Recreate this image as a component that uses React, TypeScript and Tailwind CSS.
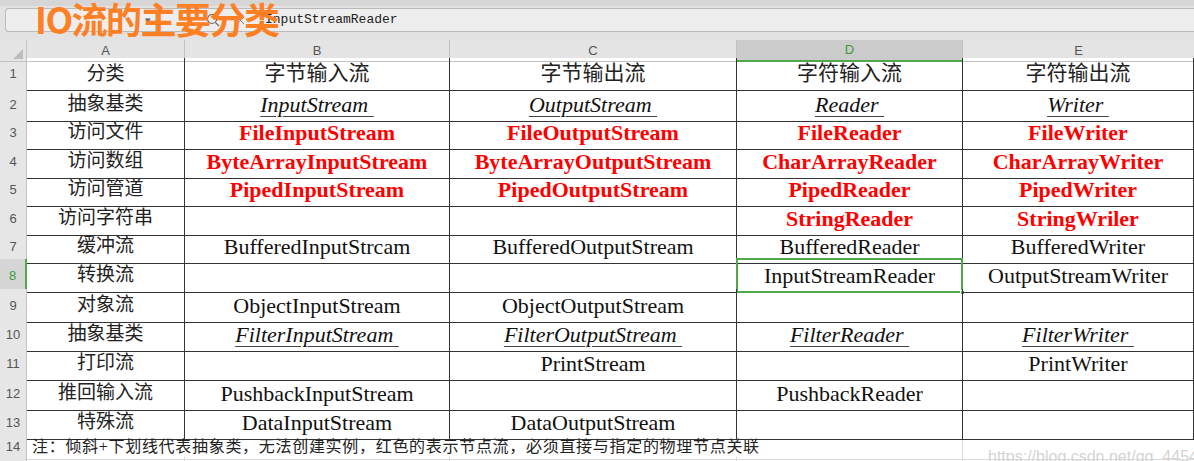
import { FC } from "react";
import { X } from "lucide-react";

type Kind = "n" | "r" | "i" | "h";

interface Row {
    num: number;
    h: string;
    label: string;
    cells: [string, Kind][];
}

const rows: Row[] = [
    { num: 1, h: "h-[30px]", label: "分类", cells: [["字节输入流", "h"], ["字节输出流", "h"], ["字符输入流", "h"], ["字符输出流", "h"]] },
    { num: 2, h: "h-[28px]", label: "抽象基类", cells: [["InputStream", "i"], ["OutputStream", "i"], ["Reader", "i"], ["Writer", "i"]] },
    { num: 3, h: "h-[29px]", label: "访问文件", cells: [["FileInputStream", "r"], ["FileOutputStream", "r"], ["FileReader", "r"], ["FileWriter", "r"]] },
    { num: 4, h: "h-[28px]", label: "访问数组", cells: [["ByteArrayInputStream", "r"], ["ByteArrayOutputStream", "r"], ["CharArrayReader", "r"], ["CharArrayWriter", "r"]] },
    { num: 5, h: "h-[29px]", label: "访问管道", cells: [["PipedInputStream", "r"], ["PipedOutputStream", "r"], ["PipedReader", "r"], ["PipedWriter", "r"]] },
    { num: 6, h: "h-[28px]", label: "访问字符串", cells: [["", "n"], ["", "n"], ["StringReader", "r"], ["StringWriler", "r"]] },
    { num: 7, h: "h-[29px]", label: "缓冲流", cells: [["BufferedInputStrcam", "n"], ["BufferedOutputStream", "n"], ["BufferedReader", "n"], ["BufferedWriter", "n"]] },
    { num: 8, h: "h-[30px]", label: "转换流", cells: [["", "n"], ["", "n"], ["InputStreamReader", "n"], ["OutputStreamWriter", "n"]] },
    { num: 9, h: "h-[29px]", label: "对象流", cells: [["ObjectInputStream", "n"], ["ObjectOutputStream", "n"], ["", "n"], ["", "n"]] },
    { num: 10, h: "h-[29px]", label: "抽象基类", cells: [["FilterInputStream", "i"], ["FilterOutputStream", "i"], ["FilterReader", "i"], ["FilterWriter", "i"]] },
    { num: 11, h: "h-[30px]", label: "打印流", cells: [["", "n"], ["PrintStream", "n"], ["", "n"], ["PrintWriter", "n"]] },
    { num: 12, h: "h-[29px]", label: "推回输入流", cells: [["PushbackInputStream", "n"], ["", "n"], ["PushbackReader", "n"], ["", "n"]] },
    { num: 13, h: "h-[29px]", label: "特殊流", cells: [["DataInputStream", "n"], ["DataOutputStream", "n"], ["", "n"], ["", "n"]] },
];

const kindClass: Record<Kind, string> = {
    n: "text-[22px] text-[#111]",
    r: "text-[22px] font-bold text-[#ff0000]",
    i: "text-[22px] italic text-[#111] underline decoration-[#444] decoration-1 underline-offset-[4px]",
    h: "text-[21px] text-[#222]",
};

const grid = "grid grid-cols-[27px_158px_265px_287px_226px_231px]";
const serif = "font-['Liberation_Serif','Noto_Sans_CJK_SC',serif]";
const sans = "font-['Liberation_Sans',Arial,sans-serif]";

const RowHead: FC<{ num?: number; active?: boolean }> = ({ num, active }) => (
    <div className={`flex items-center justify-center text-[13px] ${sans} border-b border-[#cdcdcd] ${active ? "bg-[#d6d6d6] text-[#3c9a3c] border-r-2 border-r-[#4ea94b]" : "bg-[#e6e6e6] text-[#555] border-r border-r-[#c2c2c2]"}`}>
        {num}
    </div>
);

const Cell: FC<{ text: string; kind: Kind; selected?: boolean }> = ({ text, kind, selected }) => (
    <div className={`relative flex items-center justify-center border-r border-b border-[#333] whitespace-nowrap ${serif}`}>
        {text && (
            <span className={kindClass[kind]}>
                {kind === "i" ? text + "\u00a0" : text}
            </span>
        )}
        {selected && (
            <>
                <div className="absolute -inset-px border-2 border-[#4ea94b]" />
                <div className="absolute -right-[3px] -bottom-[3px] w-[5px] h-[5px] bg-[#4ea94b] border border-white" />
            </>
        )}
    </div>
);

const App: FC = () => {
    return (
        <div className="relative w-[1194px] h-[461px] overflow-hidden bg-white">
            {/* formula bar */}
            <div className="h-[40px] bg-[#e2e2e2] pt-[2px] pl-[5px] border-t-[6px] border-[#d6d6d6]">
                <div className="h-[24px] flex items-center rounded-l-[4px] border border-r-0 border-[#b9b9b9] bg-[#eeeeee]">
                    <div className="w-[150px] h-full border-r border-[#c8c8c8] flex items-center justify-end pr-1 text-[11px] text-[#666]">▾</div>
                    <div className="flex items-center gap-[14px] pl-[50px] text-[#666]">
                        <svg width="14" height="14" viewBox="0 0 14 14" fill="none" stroke="#666" strokeWidth="1.2">
                            <circle cx="6" cy="6" r="4.5" />
                            <path d="M9.3 9.3 13 13" />
                        </svg>
                        <X size={13} strokeWidth={1.5} />
                    </div>
                    <div className="pl-[18px] font-['Liberation_Mono',monospace] text-[13px] text-[#222]">InputStreamReader</div>
                </div>
            </div>

            {/* column header */}
            <div className={`${grid} h-[18px] bg-[#e4e4e4] text-[13px] text-[#555] ${sans}`}>
                <div className="relative border-r border-b border-[#c2c2c2]">
                    <svg className="absolute right-[3px] bottom-[2px]" width="10" height="10" viewBox="0 0 10 10">
                        <polygon points="10,0 10,10 0,10" fill="#bdbdbd" />
                    </svg>
                </div>
                <div className="flex items-center justify-center border-r border-b border-[#c2c2c2]">A</div>
                <div className="flex items-center justify-center border-r border-b border-[#c2c2c2]">B</div>
                <div className="flex items-center justify-center border-r border-b border-[#c2c2c2]">C</div>
                <div className="flex items-center justify-center bg-[#cbcbcb] text-[#3c9a3c] border-r border-[#c2c2c2] border-b-2 border-b-[#4ea94b]">D</div>
                <div className="flex items-center justify-center border-b border-[#c2c2c2]">E</div>
            </div>

            {rows.map((row) => (
                <div key={row.num} className={`${grid} ${row.h}`}>
                    <RowHead num={row.num} active={row.num === 8} />
                    <div className={`flex items-center justify-center border-r border-b border-[#333] text-[19px] text-[#222] ${serif}`}>
                        {row.label}
                    </div>
                    {row.cells.map(([text, kind], i) => (
                        <Cell key={i} text={text} kind={kind} selected={row.num === 8 && i === 2} />
                    ))}
                </div>
            ))}

            {/* note row */}
            <div className={`${grid} h-[22px]`}>
                <RowHead num={14} />
                <div className={`col-span-4 flex items-center pl-[5px] border-r border-b border-[#dadada] whitespace-nowrap text-[16px] tracking-[0.7px] text-[#222] ${serif}`}>
                    注：倾斜+下划线代表抽象类，无法创建实例，红色的表示节点流，必须直接与指定的物理节点关联
                </div>
                <div className="border-b border-[#dadada]" />
            </div>
            <div className={`${grid} h-[29px]`}>
                <RowHead />
                <div className="border-r border-[#dadada]" />
                <div className="border-r border-[#dadada]" />
                <div className="border-r border-[#dadada]" />
                <div className="border-r border-[#dadada]" />
                <div />
            </div>

            {/* title overlay */}
            <div className="absolute left-[35px] top-[0px] leading-none text-[36px] tracking-[-1.5px] font-bold text-[#ff7f24] font-['Noto_Sans_CJK_SC',sans-serif]">
                IO流的主要分类
            </div>

            {/* watermark */}
            <div className={`absolute left-[988px] top-[445px] text-[16px] text-[#d4d4d4] ${sans}`}>
                https://blog.csdn.net/qq_44543508
            </div>
        </div>
    );
};

export default App;
